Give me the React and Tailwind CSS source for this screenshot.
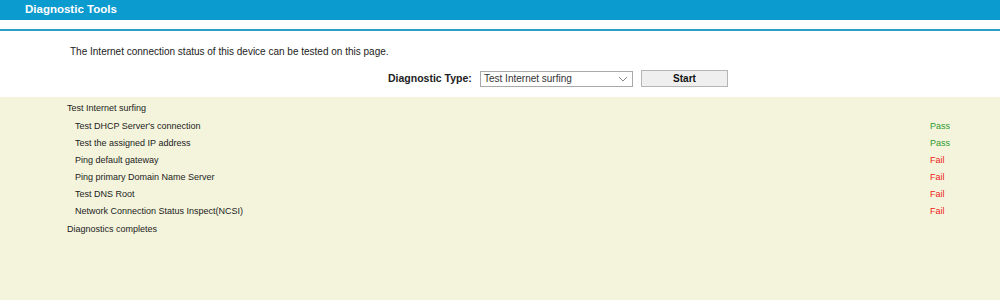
export default function App() {
  const rows = [
    ["Test DHCP Server's connection", "Pass"],
    ["Test the assigned IP address", "Pass"],
    ["Ping default gateway", "Fail"],
    ["Ping primary Domain Name Server", "Fail"],
    ["Test DNS Root", "Fail"],
    ["Network Connection Status Inspect(NCSI)", "Fail"],
  ];
  return (
    <div className="w-[1000px] h-[300px] bg-white overflow-hidden flex flex-col text-[#333]" style={{ fontFamily: '"Liberation Sans", Arial, sans-serif' }}>
      <div className="h-[20px] bg-[#0b9bcf] flex items-center pl-[25px] text-white font-bold text-[11.5px]">Diagnostic Tools</div>
      <div className="h-[9px]" />
      <div className="h-[2px] bg-[#2b9fc8]" />
      <div className="pl-[70px] pt-[13px] text-[10px] leading-[15px] text-[#222]">The Internet connection status of this device can be tested on this page.</div>
      <div className="flex items-center pl-[388px] pt-[8px] pb-[7px] h-[38px]">
        <span className="font-bold text-[10.5px] w-[92px] whitespace-nowrap text-[#222]">Diagnostic Type:</span>
        <div className="w-[153px] h-[16px] border border-[#a9a9a9] bg-white flex items-center justify-between pl-[3px] pr-[4px] text-[10px] text-[#333]">
          <span>Test Internet surfing</span>
          <svg width="10" height="6" viewBox="0 0 10 6"><path d="M1 1 L5 5 L9 1" fill="none" stroke="#888" strokeWidth="1" /></svg>
        </div>
        <div className="ml-[8px] w-[87px] h-[17px] border border-[#b5b5b5] bg-[#efefef] flex items-center justify-center font-bold text-[10px] text-[#111]">Start</div>
      </div>
      <div className="flex-1 bg-[#f4f4dc] pt-[3.5px] text-[9px] text-[#222]">
        <div className="pl-[67px] h-[17.2px] flex items-center">Test Internet surfing</div>
        {rows.map(([label, st]) => (
          <div key={label} className="pl-[75px] h-[17.2px] flex items-center">
            <span className="w-[855px]">{label}</span>
            <span className={st === "Pass" ? "text-[#2e9a2e]" : "text-[#f01818]"}>{st}</span>
          </div>
        ))}
        <div className="pl-[67px] h-[17.2px] flex items-center">Diagnostics completes</div>
      </div>
    </div>
  );
}
